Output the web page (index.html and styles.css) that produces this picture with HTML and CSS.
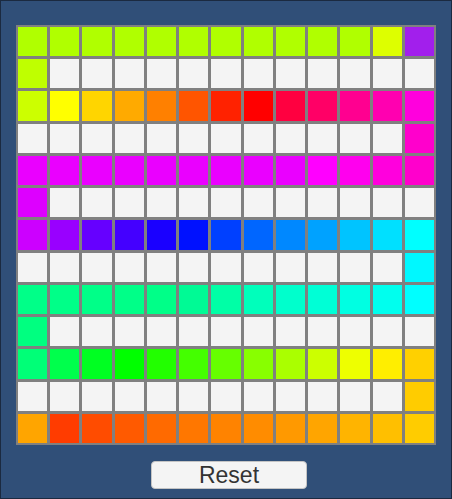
FILE: index.html
```html
<!DOCTYPE html>
<html lang="en">
<head>
  <meta charset="UTF-8" />
  <meta name="viewport" content="width=device-width, initial-scale=1.0"/>
  <title>Color Grid</title>
  <link rel="stylesheet" href="styles.css">
</head>
<body>

  <div class="panel">
    <div class="grid" id="grid"></div>
    <button type="button" class="reset" onclick="resetGrid()">Reset</button>
  </div>

  <script>
    const W = '#f4f4f4';
    const rows = [
      ['#b0ff00','#b0ff00','#b0ff00','#b0ff00','#b0ff00','#b0ff00','#b0ff00','#b0ff00','#b0ff00','#b0ff00','#b0ff00','#ddff00','#a21fec'],
      ['#bfff00',W,W,W,W,W,W,W,W,W,W,W,W],
      ['#ccff00','#ffff00','#ffd500','#ffaa00','#ff8000','#ff5500','#ff2200','#ff0000','#ff0040','#ff0066','#ff0090','#ff00b0','#ff00dd'],
      [W,W,W,W,W,W,W,W,W,W,W,W,'#ff00cc'],
      ['#ea00ff','#ea00ff','#ea00ff','#ea00ff','#ea00ff','#ea00ff','#ea00ff','#ea00ff','#ea00ff','#ff00ff','#ff00ee','#ff00dd','#ff00cc'],
      ['#dd00ff',W,W,W,W,W,W,W,W,W,W,W,W],
      ['#cc00ff','#9900ff','#6600ff','#4400ff','#1a00ff','#0011ff','#0040ff','#0066ff','#0088ff','#00a2ff','#00c4ff','#00e0ff','#00ffff'],
      [W,W,W,W,W,W,W,W,W,W,W,W,'#00f8ff'],
      ['#00ff88','#00ff88','#00ff88','#00ff88','#00ff88','#00fa95','#00ffa6','#00ffbb','#00ffcc','#00ffd6','#00ffe2','#00ffee','#00ffff'],
      ['#00ff80',W,W,W,W,W,W,W,W,W,W,W,W],
      ['#00ff77','#00ff4c','#00ff22','#00ff00','#22ff00','#44ff00','#66ff00','#88ff00','#aaff00','#ccff00','#eeff00','#ffee00','#ffd000'],
      [W,W,W,W,W,W,W,W,W,W,W,W,'#ffcc00'],
      ['#ffa500','#ff3c00','#ff4c00','#ff5a00','#ff6a00','#ff7700','#ff8300','#ff8c00','#ff9900','#ffa500','#ffb400','#ffbf00','#ffcc00']
    ];

    function drawGrid() {
      const grid = document.getElementById('grid');
      grid.innerHTML = '';
      rows.forEach(row => {
        row.forEach(color => {
          const cell = document.createElement('div');
          cell.className = 'cell';
          cell.style.background = color;
          grid.appendChild(cell);
        });
      });
    }

    function resetGrid() {
      drawGrid();
    }

    drawGrid();
  </script>
</body>
</html>
```

FILE: styles.css
```css
html, body { margin: 0; padding: 0; }
body { font-family: "Liberation Sans", Arial, sans-serif; }
.panel {
  width: 452px;
  height: 499px;
  box-sizing: border-box;
  border: 1px solid #1b2a40;
  background: #304f78;
  display: flex;
  flex-direction: column;
  align-items: center;
  padding-top: 24px;
}
.grid {
  width: 420px;
  height: 420px;
  box-sizing: border-box;
  padding: 2px;
  gap: 3px;
  background: #808080;
  display: grid;
  grid-template-columns: repeat(13, 1fr);
  grid-template-rows: repeat(13, 1fr);
}
.cell { background: #f4f4f4; }
.reset {
  margin-top: 16px;
  margin-left: 6px;
  width: 156px;
  height: 28px;
  padding: 0;
  background: #f4f4f4;
  border: 1px solid #c4c4c4;
  border-radius: 4px;
  color: #333333;
  font-family: "Liberation Sans", Arial, sans-serif;
  font-size: 23px;
  line-height: 26px;
  cursor: pointer;
}
```
